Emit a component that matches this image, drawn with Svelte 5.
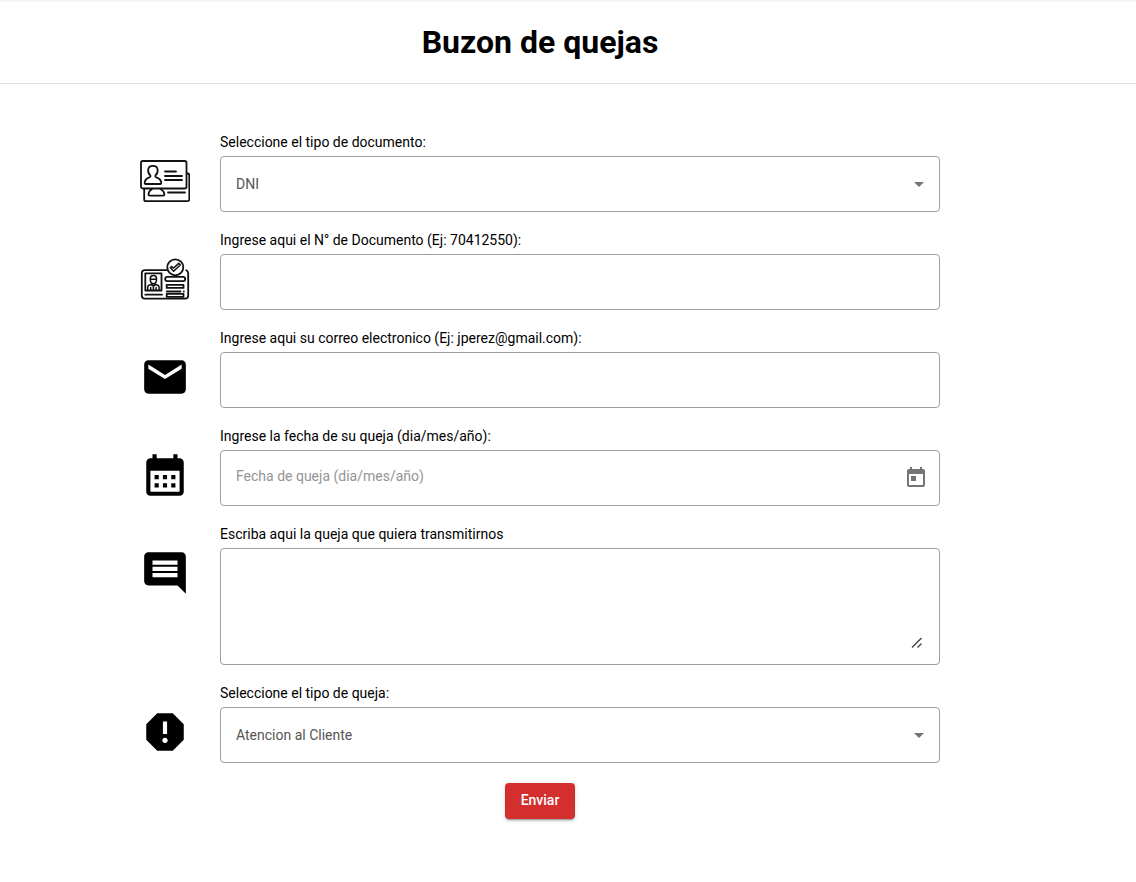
<script>
  let tipoDocumento = $state('DNI');
  let numero = $state('');
  let correo = $state('');
  let fecha = $state('');
  let queja = $state('');
  let tipoQueja = $state('Atencion al Cliente');

  function enviar(event) {
    event.preventDefault();
  }
</script>

<main>
  <header>
    <h1>Buzon de quejas</h1>
  </header>

  <form onsubmit={enviar}>
    <div class="row">
      <label for="tipo-documento">Seleccione el tipo de documento:</label>
      <svg class="icon" viewBox="0 0 50 50" fill="none" stroke="#111" stroke-width="1.8" stroke-linecap="round" stroke-linejoin="round" aria-hidden="true">
        <path d="M47 17.500h.5q1.800 0 1.800 1.800v24q0 1.900-1.800 1.900H6q-1.800 0-1.800-1.800V33" />
        <rect x="1" y="5" width="45.500" height="27.500" rx="1.800" />
        <path d="M10.300 19.400c-3.200-3-3.300-9.500 2.600-9.500s5.800 6.500 2.600 9.500q-.7 1.200.9 2 4.400 1.400 4.900 5.500 0 1.100-1.100 1.100H5.700q-1.100 0-1.100-1.100.5-4.100 4.800-5.500 1.600-.8.9-2z" />
        <path d="M25 15.500h11M25 20h17M25 24h17M28 36.500h17" />
        <path d="M12 33q-3.400 2-3.500 5.500 0 1.200 1.200 1.200h13.500q1.200 0 1.200-1.200Q24.200 35 20.500 33" />
      </svg>
      <div class="field">
        <select id="tipo-documento" bind:value={tipoDocumento}>
          <option>DNI</option>
          <option>Pasaporte</option>
        </select>
        <svg class="arrow" viewBox="0 0 10 5" aria-hidden="true"><path d="M0 0h10L5 5z" /></svg>
      </div>
    </div>

    <div class="row">
      <label for="numero">Ingrese aqui el N° de Documento (Ej: 70412550):</label>
      <svg class="icon" viewBox="0 0 50 50" fill="none" stroke="#111" stroke-width="1.800" stroke-linecap="round" stroke-linejoin="round" aria-hidden="true">
        <path d="M27 16.200H5Q1.800 16.200 1.800 19.400v22Q1.800 44.600 5 44.600h40q3.200 0 3.200-3.200v-22q0-2.200-2-3.200" />
        <rect x="5.300" y="19.300" width="16.200" height="17.200" />
        <path stroke-width="1.500" d="M10.300 25.500v-1.300q.3-2.600 3.100-2.600t3.100 2.600v1.300M10.400 25.200h6v1.600q-.5 2.700-3 3-2.500-.3-3-3zM7.700 36v-2.800q.3-2.300 3.400-2.700l2.300 1.500 2.300-1.500q3.100.4 3.400 2.700V36M10.700 33.500V36M16.100 33.500V36M13.400 32.500V36" />
        <path d="M5.300 40.700H22" />
        <path d="M26.700 31.300h16.800v3H26.700zM26.700 40.300h16.800v3H26.700z" transform="translate(0 -.4)" />
        <path d="M26.700 37.500h13.800M43.800 37.500h.1" />
        <rect x="25.200" y="22.900" width="20" height="4.200" rx="2.100" />
        <circle cx="35.300" cy="13.300" r="8" fill="#fff" />
        <path d="m30.300 13.800 1.200-1.200 2.200 1.400 5-4.600 1.600 1.600-6.700 6.200z" stroke-width="1.500" />
      </svg>
      <div class="field"><input id="numero" type="text" bind:value={numero} /></div>
    </div>

    <div class="row">
      <label for="correo">Ingrese aqui su correo electronico (Ej: jperez@gmail.com):</label>
      <svg class="icon" viewBox="0 0 24 24" aria-hidden="true">
        <path d="M20 4H4c-1.100 0-1.990.9-1.990 2L2 18c0 1.100.9 2 2 2h16c1.100 0 2-.9 2-2V6c0-1.100-.9-2-2-2zm0 4-8 5-8-5V6l8 5 8-5v2z" />
      </svg>
      <div class="field"><input id="correo" type="email" bind:value={correo} /></div>
    </div>

    <div class="row">
      <label for="fecha">Ingrese la fecha de su queja (dia/mes/año):</label>
      <svg class="icon" viewBox="0 0 24 24" aria-hidden="true">
        <path d="M19 4h-1V2h-2v2H8V2H6v2H5c-1.110 0-1.990.9-1.990 2L3 20c0 1.100.89 2 2 2h14c1.100 0 2-.9 2-2V6c0-1.100-.9-2-2-2zm0 16H5V10h14v10zM9 14H7v-2h2v2zm4 0h-2v-2h2v2zm4 0h-2v-2h2v2zm-8 4H7v-2h2v2zm4 0h-2v-2h2v2zm4 0h-2v-2h2v2z" />
      </svg>
      <div class="field">
        <input id="fecha" class="date" type="text" placeholder="Fecha de queja (dia/mes/año)" bind:value={fecha} />
        <button class="picker" type="button" aria-label="Abrir calendario">
          <svg viewBox="0 0 24 24" aria-hidden="true">
            <path d="M19 3h-1V1h-2v2H8V1H6v2H5c-1.110 0-1.990.9-1.990 2L3 19c0 1.100.89 2 2 2h14c1.100 0 2-.9 2-2V5c0-1.100-.9-2-2-2zm0 16H5V8h14v11zM7 10h5v5H7z" />
          </svg>
        </button>
      </div>
    </div>

    <div class="row">
      <label for="queja">Escriba aqui la queja que quiera transmitirnos</label>
      <svg class="icon" viewBox="0 0 24 24" aria-hidden="true">
        <path d="M21.990 4c0-1.100-.89-2-1.990-2H4c-1.100 0-2 .9-2 2v12c0 1.100.9 2 2 2h14l4 4-.01-18zM18 14H6v-2h12v2zm0-3H6V9h12v2zm0-3H6V6h12v2z" />
      </svg>
      <div class="field multiline">
        <textarea id="queja" bind:value={queja}></textarea>
        <svg class="grip" viewBox="0 0 12 12" aria-hidden="true"><path d="M1 10.500 10.500 1M6.500 10.500l4-4" /></svg>
      </div>
    </div>

    <div class="row">
      <label for="tipo-queja">Seleccione el tipo de queja:</label>
      <svg class="icon" viewBox="0 0 24 24" aria-hidden="true">
        <path d="M15.730 3H8.270L3 8.270v7.460L8.270 21h7.460L21 15.730V8.270L15.730 3zM12 17.300c-.72 0-1.300-.58-1.300-1.300s.58-1.300 1.300-1.300 1.300.58 1.300 1.300-.58 1.300-1.300 1.300zm1-4.300h-2V7h2v6z" />
      </svg>
      <div class="field">
        <select id="tipo-queja" bind:value={tipoQueja}>
          <option>Atencion al Cliente</option>
          <option>Producto</option>
        </select>
        <svg class="arrow" viewBox="0 0 10 5" aria-hidden="true"><path d="M0 0h10L5 5z" /></svg>
      </div>
    </div>

    <button class="submit" type="submit">Enviar</button>
  </form>
</main>

<style>
  :global(body) {
    margin: 0;
    background: #fff;
  }

  main {
    border-top: 2px solid #f5f5f5;
    font-family: Roboto, sans-serif;
    font-size: 14px;
    color: #000;
  }

  header {
    padding: 20px 56px 21px 0;
    border-bottom: 1px solid #e0e0e0;
    text-align: center;
  }

  h1 {
    margin: 0;
    font-size: 32px;
    line-height: 40px;
    font-weight: 700;
  }

  form {
    display: flex;
    flex-direction: column;
    align-items: center;
    gap: 20px;
    padding: 50px 56px 60px 0;
  }

  .row {
    display: grid;
    grid-template-columns: 50px minmax(0, 1fr);
    column-gap: 30px;
    width: 100%;
    max-width: 800px;
  }

  label {
    grid-column: 2;
    line-height: 16px;
    padding-bottom: 6px;
  }

  .icon {
    width: 50px;
    height: 50px;
  }

  .field {
    display: flex;
    align-items: center;
    box-sizing: border-box;
    min-height: 56px;
    padding: 0 15px;
    border: 1px solid #9e9e9e;
    border-radius: 4px;
  }

  .field:focus-within {
    border-color: #212121;
  }

  .multiline {
    position: relative;
    padding: 15px;
  }

  input,
  select,
  textarea {
    flex: 1;
    min-width: 0;
    margin: 0;
    padding: 0;
    border: 0;
    outline: 0;
    background: transparent;
    font: inherit;
    line-height: 24px;
    color: #555;
  }

  select {
    appearance: none;
    align-self: stretch;
  }

  textarea {
    display: block;
    height: 85px;
    resize: vertical;
  }

  textarea::-webkit-resizer {
    background: transparent;
  }

  .grip {
    position: absolute;
    right: 16px;
    bottom: 15px;
    width: 12px;
    height: 12px;
    fill: none;
    stroke: #444;
    stroke-width: 1.4;
    pointer-events: none;
  }

  .date {
    padding-bottom: 4px;
  }

  input::placeholder {
    color: #949494;
    opacity: 1;
  }

  .arrow {
    width: 10px;
    height: 5px;
    fill: #757575;
    pointer-events: none;
  }

  .picker {
    display: flex;
    margin-right: -4px;
    padding: 0;
    border: 0;
    background: transparent;
    cursor: pointer;
  }

  .picker svg {
    width: 24px;
    height: 24px;
    fill: #757575;
  }

  .submit {
    height: 36px;
    padding: 0 16px 2px;
    border: 0;
    border-radius: 4px;
    background: #d32f2f;
    color: #fff;
    font: 500 14px Roboto, sans-serif;
    box-shadow: 0 3px 1px -2px rgba(0, 0, 0, 0.2), 0 2px 2px rgba(0, 0, 0, 0.14), 0 1px 5px rgba(0, 0, 0, 0.12);
    cursor: pointer;
  }
</style>
